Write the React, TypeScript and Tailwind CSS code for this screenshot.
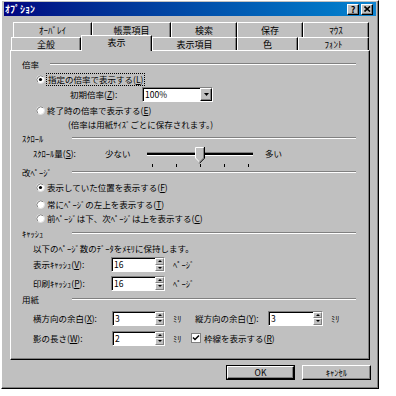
import React from "react";

const raised =
  "border border-t-white border-l-white border-r-black border-b-black shadow-[inset_-1px_-1px_#808080]";
const sunken =
  "border border-t-[#808080] border-l-[#808080] border-r-white border-b-white shadow-[inset_1px_1px_#000]";

const row1 = [
  { label: "ｵｰﾊﾞﾚｲ", w: "w-[79px]" },
  { label: "帳票項目", w: "w-[79px]" },
  { label: "検索", w: "w-[66px]" },
  { label: "保存", w: "w-[66px]" },
  { label: "ﾏｳｽ", w: "w-[66px]" },
];

const row2 = [
  { label: "全般", w: "w-[70px]" },
  { label: "表示", w: "w-[71px]", on: true },
  { label: "表示項目", w: "w-[85px]" },
  { label: "色", w: "w-[61px]" },
  { label: "ﾌｫﾝﾄ", w: "w-[71px]" },
];

function Tab({ label, w, on }: { label: string; w: string; on?: boolean }) {
  if (on) {
    return (
      <div
        className={`relative top-[1px] z-10 flex h-[16px] items-center justify-center border-l border-t border-r border-l-white border-t-white border-r-black bg-[#c0c0c0] pb-[2px] text-[9px] shadow-[inset_-1px_0_#808080] ${w}`}
      >
        {label}
      </div>
    );
  }
  return (
    <div
      className={`flex h-full items-center justify-center border-l border-t border-r border-l-white border-t-white border-r-black text-[9px] shadow-[inset_-1px_0_#808080] ${w}`}
    >
      {label}
    </div>
  );
}

function Group({ label, wide }: { label: string; wide?: boolean }) {
  return (
    <div className="flex h-full items-center">
      <span className={wide ? "w-[50px]" : "w-[28px]"}>{label}</span>
      <div className="h-[2px] flex-1 border-t border-b border-t-[#808080] border-b-white" />
    </div>
  );
}

function Radio({ on }: { on?: boolean }) {
  return (
    <svg width="9" height="9" viewBox="0 0 9 9" className="shrink-0">
      <circle cx="4.5" cy="4.5" r="4" fill="#fff" stroke="#dfdfdf" />
      <path d="M1.7 7.3A4 4 0 0 1 7.3 1.7" stroke="#808080" fill="none" />
      {on && <circle cx="4.5" cy="4.5" r="1.6" fill="#000" />}
    </svg>
  );
}

function Arrow({ up }: { up?: boolean }) {
  return (
    <svg width="4" height="2" viewBox="0 0 4 2">
      <path d={up ? "M2 0L4 2H0z" : "M0 0H4L2 2z"} fill="#000" />
    </svg>
  );
}

function SpinBox({ value, w }: { value: string; w: string }) {
  return (
    <div className={`flex h-[15px] bg-white ${sunken} ${w}`}>
      <div className="flex flex-1 items-center pl-[2px]">{value}</div>
      <div className="flex w-[9px] flex-col">
        <div className="flex flex-1 items-center justify-center border border-t-white border-l-white border-r-[#808080] border-b-[#808080] bg-[#c0c0c0]">
          <Arrow up />
        </div>
        <div className="flex flex-1 items-center justify-center border border-t-white border-l-white border-r-[#808080] border-b-[#808080] bg-[#c0c0c0]">
          <Arrow />
        </div>
      </div>
    </div>
  );
}

function Thumb() {
  return (
    <svg width="10" height="17" viewBox="0 0 10 17" className="absolute left-[48px] top-[-6px]">
      <path d="M0 0H9V11L4.5 15.5L0 11Z" fill="#c0c0c0" />
      <path d="M0.5 11V0.5H8.5" stroke="#fff" fill="none" />
      <path d="M0.5 11L4.5 15" stroke="#fff" fill="none" />
      <path d="M8.5 1V11L4.5 15" stroke="#808080" fill="none" />
      <path d="M9.5 0V11.2L4.5 16.3" stroke="#000" fill="none" />
    </svg>
  );
}

export default function App() {
  return (
    <div className="h-[396px] w-[396px] bg-white font-['Noto_Sans_CJK_JP','Noto_Sans_CJK_SC',sans-serif] leading-none text-black">
      <div
        className={`ml-[1px] flex h-[389px] w-[378px] flex-col bg-[#c0c0c0] px-[2px] pt-[1px] ${raised}`}
      >
        {/* title bar */}
        <div className="flex h-[14px] items-center bg-gradient-to-r from-[#000080] to-[#1084d0] pl-[1px] pr-[3px]">
          <span className="text-[10px] font-bold text-white">ｵﾌﾟｼｮﾝ</span>
          <div className="ml-auto flex gap-[1px]">
            <div className={`flex h-[11px] w-[12px] items-center justify-center bg-[#c0c0c0] text-[9px] font-bold ${raised}`}>
              ?
            </div>
            <div className={`ml-[1px] flex h-[11px] w-[12px] items-center justify-center bg-[#c0c0c0] ${raised}`}>
              <svg width="7" height="6" viewBox="0 0 7 6">
                <path d="M0.5 0.5L6 5.5M6 0.5L0.5 5.5" stroke="#000" strokeWidth="1.6" />
              </svg>
            </div>
          </div>
        </div>

        {/* tabs */}
        <div className="ml-[9px] mt-[6px] flex h-[15px]">
          {row1.map((t) => (
            <Tab key={t.label} label={t.label} w={t.w} />
          ))}
        </div>
        <div className="ml-[7px] flex h-[13px] items-end">
          {row2.map((t) => (
            <Tab key={t.label} label={t.label} w={t.w} on={t.on} />
          ))}
        </div>

        {/* panel */}
        <div className={`ml-[6px] flex h-[310px] w-[360px] flex-col pl-[11px] pr-[13px] pt-[5px] text-[8.5px] ${raised}`}>
          <div className="h-[16px]">
            <Group label="倍率" />
          </div>
          <div className="flex h-[15px] items-center pl-[14px]">
            <Radio on />
            <span className="ml-[1px] border border-dotted border-black px-[1px] py-[1px]">
              指定の倍率で表示する(<u>L</u>)
            </span>
          </div>
          <div className="flex h-[15px] items-center pl-[48px]">
            <span className="w-[72px]">
              初期倍率(<u>Z</u>):
            </span>
            <div className={`flex h-[15px] w-[71px] bg-white ${sunken}`}>
              <div className="flex flex-1 items-center pl-[2px]">100%</div>
              <div className={`flex w-[12px] items-center justify-center bg-[#c0c0c0] ${raised}`}>
                <svg width="5" height="3" viewBox="0 0 5 3">
                  <path d="M0 0H5L2.5 3z" fill="#000" />
                </svg>
              </div>
            </div>
          </div>
          <div className="flex h-[17px] items-center gap-[2px] pl-[14px]">
            <Radio />
            <span>
              終了時の倍率で表示する(<u>E</u>)
            </span>
          </div>
          <div className="flex h-[11px] items-center pl-[46px]">(倍率は用紙ｻｲｽﾞごとに保存されます。)</div>

          <div className="h-[16px]">
            <Group label="ｽｸﾛｰﾙ" wide />
          </div>
          <div className="flex h-[15px] items-center pl-[11px]">
            <span className="w-[72px]">
              ｽｸﾛｰﾙ量(<u>S</u>):
            </span>
            <span className="w-[42px]">少ない</span>
            <div className="relative h-[4px] w-[106px] border-t border-b border-t-[#808080] border-b-white bg-black">
              <Thumb />
            </div>
            <span className="ml-[12px]">多い</span>
          </div>
          <div className="flex h-[6px] w-[97px] items-end justify-between ml-[130px]">
            <div className="h-[3px] w-[1px] bg-black" />
            <div className="h-[3px] w-[1px] bg-black" />
            <div className="h-[3px] w-[1px] bg-black" />
            <div className="h-[3px] w-[1px] bg-black" />
            <div className="h-[3px] w-[1px] bg-black" />
          </div>

          <div className="h-[10px]">
            <Group label="改ﾍﾟｰｼﾞ" wide />
          </div>
          <div className="flex h-[20px] items-center gap-[2px] pl-[14px]">
            <Radio on />
            <span>
              表示していた位置を表示する(<u>F</u>)
            </span>
          </div>
          <div className="flex h-[15px] items-center gap-[2px] pl-[14px]">
            <Radio />
            <span>
              常にﾍﾟｰｼﾞの左上を表示する(<u>T</u>)
            </span>
          </div>
          <div className="flex h-[13px] items-center gap-[2px] pl-[14px]">
            <Radio />
            <span>
              前ﾍﾟｰｼﾞは下、次ﾍﾟｰｼﾞは上を表示する(<u>C</u>)
            </span>
          </div>

          <div className="h-[16px]">
            <Group label="ｷｬｯｼｭ" wide />
          </div>
          <div className="flex h-[14px] items-center pl-[11px]">以下のﾍﾟｰｼﾞ数のﾃﾞｰﾀをﾒﾓﾘに保持します。</div>
          <div className="flex h-[19px] items-center pl-[11px]">
            <span className="w-[78px]">
              表示ｷｬｯｼｭ(<u>V</u>):
            </span>
            <SpinBox value="16" w="w-[54px]" />
            <span className="ml-[8px]">ﾍﾟｰｼﾞ</span>
          </div>
          <div className="flex h-[18px] items-center pl-[11px]">
            <span className="w-[78px]">
              印刷ｷｬｯｼｭ(<u>P</u>):
            </span>
            <SpinBox value="16" w="w-[54px]" />
            <span className="ml-[8px]">ﾍﾟｰｼﾞ</span>
          </div>

          <div className="h-[14px]">
            <Group label="用紙" wide />
          </div>
          <div className="flex h-[24px] items-center pl-[11px]">
            <span className="w-[79px]">
              横方向の余白(<u>X</u>):
            </span>
            <SpinBox value="3" w="w-[53px]" />
            <span className="ml-[8px] w-[22px]">ﾐﾘ</span>
            <span className="w-[73px]">
              縦方向の余白(<u>Y</u>):
            </span>
            <SpinBox value="3" w="w-[55px]" />
            <span className="ml-[8px]">ﾐﾘ</span>
          </div>
          <div className="flex h-[16px] items-center pl-[11px]">
            <span className="w-[79px]">
              影の長さ(<u>W</u>):
            </span>
            <SpinBox value="2" w="w-[53px]" />
            <span className="ml-[8px] w-[18px]">ﾐﾘ</span>
            <svg width="10" height="10" viewBox="0 0 10 10" className="shrink-0">
              <rect x="0.5" y="0.5" width="9" height="9" fill="#fff" stroke="#808080" />
              <path d="M2 4.5L4 6.5L8 2.5" stroke="#000" strokeWidth="1.5" fill="none" />
            </svg>
            <span className="ml-[3px]">
              枠線を表示する(<u>R</u>)
            </span>
          </div>
        </div>

        {/* buttons */}
        <div className="mr-[5px] mt-[5px] flex justify-end gap-[7px] text-[8.5px]">
          <div className="h-[15px] w-[69px] border border-black">
            <div className={`flex h-full w-full items-center justify-center bg-[#c0c0c0] ${raised}`}>OK</div>
          </div>
          <div className={`flex h-[15px] w-[69px] items-center justify-center bg-[#c0c0c0] ${raised}`}>ｷｬﾝｾﾙ</div>
        </div>
      </div>
    </div>
  );
}
